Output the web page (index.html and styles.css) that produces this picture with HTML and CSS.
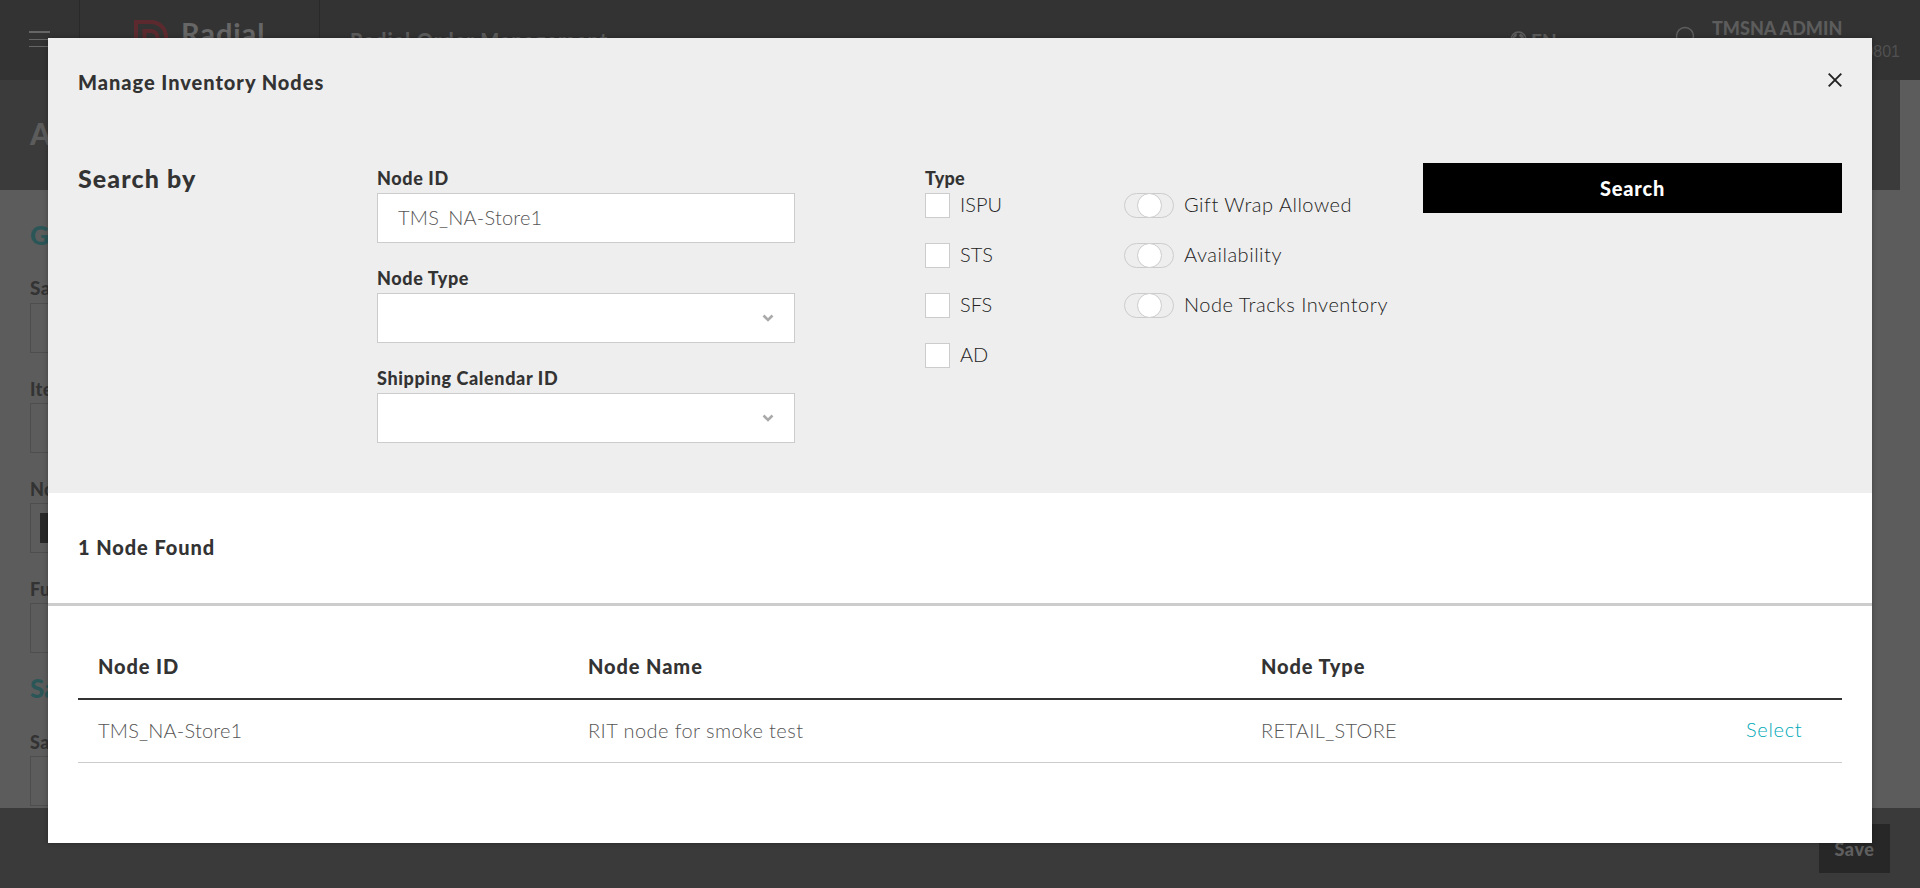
FILE: index.html
```html
<!DOCTYPE html>
<html lang="en">
<head>
<meta charset="utf-8">
<title>Radial Order Management</title>
<link rel="stylesheet" href="styles.css">
</head>
<body>
<div class="page">
  <header class="topbar">
    <div class="burger"><i></i><i></i><i></i></div>
    <div class="brand">
      <svg class="brand-mark" width="36" height="36" viewBox="0 0 36 36" fill="none" stroke="#5c2a2e" stroke-width="4"><path d="M2 36V2h15a15 15 0 0 1 15 15v19"/><path d="M10.500 36V11H17a6.500 6.500 0 0 1 6.500 6.500V36"/></svg>
      <span class="brand-name">Radial</span>
    </div>
    <div class="app-name">Radial Order Management</div>
    <div class="lang">
      <svg width="17" height="17" viewBox="0 0 17 17"><circle cx="8.500" cy="8.500" r="7.500" fill="none" stroke="#5f5f5f" stroke-width="1.400"/><path d="M2 7l2.500-4 2.500-.5-.5 3-3 2zM10 2.500l3 1.500 1.500 4-3.500-1-2-2z" fill="#5f5f5f"/></svg>
      <span>EN</span>
    </div>
    <svg class="user-icon" width="20" height="26" viewBox="0 0 20 26" fill="none" stroke="#5f5f5f" stroke-width="1.500"><circle cx="10" cy="10" r="8.500"/></svg>
    <div class="user"><b class="user-name">TMSNA ADMIN</b><span class="user-id">TMSNA0801</span></div>
  </header>
  <div class="titlebar"><span>Add</span></div>
  <main class="form">
    <h2 class="group">General</h2>
    <div class="back-field first"><label>Sales</label><div class="back-box"></div></div>
    <div class="back-field"><label>Item</label><div class="back-box"></div></div>
    <div class="back-field"><label>Node</label><div class="back-box"><div class="chip"></div></div></div>
    <div class="back-field"><label>Fulfil</label><div class="back-box"></div></div>
    <h2 class="group second">Sales</h2>
    <div class="back-field"><label>Sales</label><div class="back-box"></div></div>
  </main>
  <footer class="footer"><div class="save">Save</div></footer>
</div>

<section class="modal">
  <div class="criteria">
    <div class="modal-head">
      <h1 class="modal-title">Manage Inventory Nodes</h1>
      <svg class="close" width="14" height="14" viewBox="0 0 14 14" stroke="#222" stroke-width="1.900"><path d="M.7.7l12.600 12.600M13.300.7L.7 13.300"/></svg>
    </div>
    <div class="criteria-grid">
      <h2 class="search-by">Search by</h2>
      <div class="fields">
        <div class="field"><label>Node ID</label><div class="input"><span class="node-val">TMS_NA-Store1</span></div></div>
        <div class="field"><label>Node Type</label><div class="input select"><svg width="12" height="8" viewBox="0 0 12 8"><path d="M1.500 1.500L6 6l4.500-4.500" fill="none" stroke="#aaa" stroke-width="2.600"/></svg></div></div>
        <div class="field"><label>Shipping Calendar ID</label><div class="input select"><svg width="12" height="8" viewBox="0 0 12 8"><path d="M1.500 1.500L6 6l4.500-4.500" fill="none" stroke="#aaa" stroke-width="2.600"/></svg></div></div>
      </div>
      <div class="types">
        <label>Type</label>
        <div class="check"><i></i><span>ISPU</span></div>
        <div class="check"><i></i><span>STS</span></div>
        <div class="check"><i></i><span>SFS</span></div>
        <div class="check"><i></i><span>AD</span></div>
      </div>
      <div class="toggles">
        <div class="toggle"><i><b></b></i><span>Gift Wrap Allowed</span></div>
        <div class="toggle"><i><b></b></i><span>Availability</span></div>
        <div class="toggle"><i><b></b></i><span>Node Tracks Inventory</span></div>
      </div>
      <div class="search-btn"><span>Search</span></div>
    </div>
  </div>
  <div class="found"><span>1 Node Found</span></div>
  <div class="table">
    <div class="row head"><span>Node ID</span><span>Node Name</span><span>Node Type</span><span></span></div>
    <div class="row"><span class="node-val">TMS_NA-Store1</span><span class="node-name">RIT node for smoke test</span><span class="node-type">RETAIL_STORE</span><a>Select</a></div>
  </div>
</section>
</body>
</html>
```
FILE: styles.css
```css
* { box-sizing: border-box; margin: 0; padding: 0; }
body { width: 1920px; height: 888px; overflow: hidden; font-family: Lato, "Noto Sans", sans-serif; font-size: 20px; color: #333; background: #5c5c5c; position: relative; }

.page { height: 888px; display: flex; flex-direction: column; }
.topbar { height: 80px; background: #333; display: flex; color: #5c5c5c; flex: none; }
.burger { width: 80px; border-right: 1px solid #292929; padding: 31px 0 0 29px; }
.burger i { display: block; width: 21px; height: 1px; background: #666; margin-bottom: 6px; }
.burger i:first-child { height: 2px; margin-bottom: 6px; }
.brand { width: 240px; border-right: 1px solid #292929; display: flex; padding: 20px 0 0 54px; }
.brand-name { font-weight: 700; font-size: 29px; line-height: 32px; letter-spacing: .9px; margin-left: 11px; margin-top: -3px; color: #666; }
.app-name { width: 1188px; padding: 27px 0 0 30px; font-weight: 900; font-size: 20px; line-height: 26px; letter-spacing: 1px; }
.lang { width: 167px; display: flex; gap: 4px; padding: 31px 0 0 2px; font-weight: 900; font-size: 19px; line-height: 20px; letter-spacing: .2px; }
.user-icon { margin-top: 26px; }
.user { width: 205px; padding: 17px 0 0 17px; display: flex; flex-direction: column; }
.user-name { font-size: 18px; line-height: 22px; font-weight: 900; }
.user-id { font-family: "Liberation Sans", sans-serif; font-size: 16px; line-height: 18px; margin-top: 4px; align-self: flex-end; color: #505050; }
.titlebar { width: 1900px; height: 110px; flex: none; background: #3b3b3b; padding: 35px 30px; font-weight: 900; font-size: 30px; line-height: 36px; color: #5c5c5c; }
.form { flex: 1; min-height: 0; padding: 30px 30px 0; width: 400px; }
.group { font-size: 26px; line-height: 30px; color: #2b5658; font-weight: 900; }
.back-field { height: 100px; font-weight: 900; font-size: 18px; letter-spacing: .4px; color: #333; }
.back-field.first { margin-top: 25px; }
.back-field label { display: block; height: 28px; line-height: 28px; }
.back-field.first label { line-height: 26px; font-size: 19px; }
.back-box { height: 50px; border: 1px solid #4e4e4e; padding: 9px; }
.chip { height: 30px; background: #282828; }
.group.second { margin: -2px 0 0; height: 55px; }
.footer { height: 80px; background: #3a3a3a; display: flex; justify-content: flex-end; padding: 16px 30px; flex: none; }
.save { width: 71px; height: 49px; background: #272727; color: #5f5f5f; font-weight: 900; font-size: 18px; letter-spacing: .6px; line-height: 50px; text-align: center; }

.modal { position: absolute; left: 48px; top: 38px; width: 1824px; height: 805px; background: #fff; box-shadow: 0 0 5px rgba(0,0,0,.3); }
.criteria { height: 455px; background: #eee; padding: 0 30px; }
.modal-head { height: 125px; display: flex; justify-content: space-between; align-items: flex-start; padding-top: 30px; }
.modal-title { font-size: 20px; line-height: 28px; font-weight: 900; letter-spacing: .97px; }
.close { margin: 5px 0 0; }
.criteria-grid { display: grid; grid-template-columns: 299px 548px 199px 299px 419px; }
.search-by { font-size: 25px; line-height: 30px; font-weight: 900; letter-spacing: 1.1px; }
.field { height: 100px; width: 418px; }
.field label, .types label { display: block; height: 30px; line-height: 31px; font-size: 18px; font-weight: 900; letter-spacing: .62px; }
.types label { letter-spacing: .3px; }
.input { height: 50px; border: 1px solid #ccc; background: #fff; padding: 0 20px; line-height: 47px; color: #555; font-weight: 300; }
.node-val { letter-spacing: .2px; }
.select { display: flex; align-items: center; justify-content: flex-end; }
.check, .toggle { height: 50px; display: flex; gap: 10px; line-height: 23px; font-weight: 300; color: #222; }
.check i { width: 25px; height: 25px; background: #fff; border: 1px solid #ccc; }
.toggles { padding-top: 30px; }
.toggle i { width: 50px; height: 25px; border: 1px solid #ccc; border-radius: 13px; display: flex; justify-content: center; align-items: center; }
.toggle b { width: 25px; height: 25px; flex: none; border-radius: 50%; border: 1px solid #ccc; background: #fff; }
.check span, .toggle span { white-space: nowrap; }
.toggle span { letter-spacing: .53px; }
.search-btn { height: 50px; background: #000; color: #fff; font-weight: 900; letter-spacing: .8px; text-align: center; line-height: 50px; }
.found { height: 113px; border-bottom: 3px solid #ccc; padding: 0 30px; line-height: 109px; font-weight: 900; letter-spacing: .92px; }
.table { margin: 30px 30px 0; }
.row { height: 63px; display: grid; grid-template-columns: 490px 673px 1fr 76px; padding: 0 20px; line-height: 60px; border-bottom: 1px solid #ccc; font-weight: 300; color: #555; }
.row.head { height: 64px; border-bottom: 2px solid #333; font-weight: 900; color: #333; line-height: 61px; letter-spacing: .9px; }
.row .node-name { letter-spacing: .43px; }
.row .node-type { letter-spacing: .3px; }
.row a { color: #00a9b8; letter-spacing: .7px; line-height: 59px; }
```
